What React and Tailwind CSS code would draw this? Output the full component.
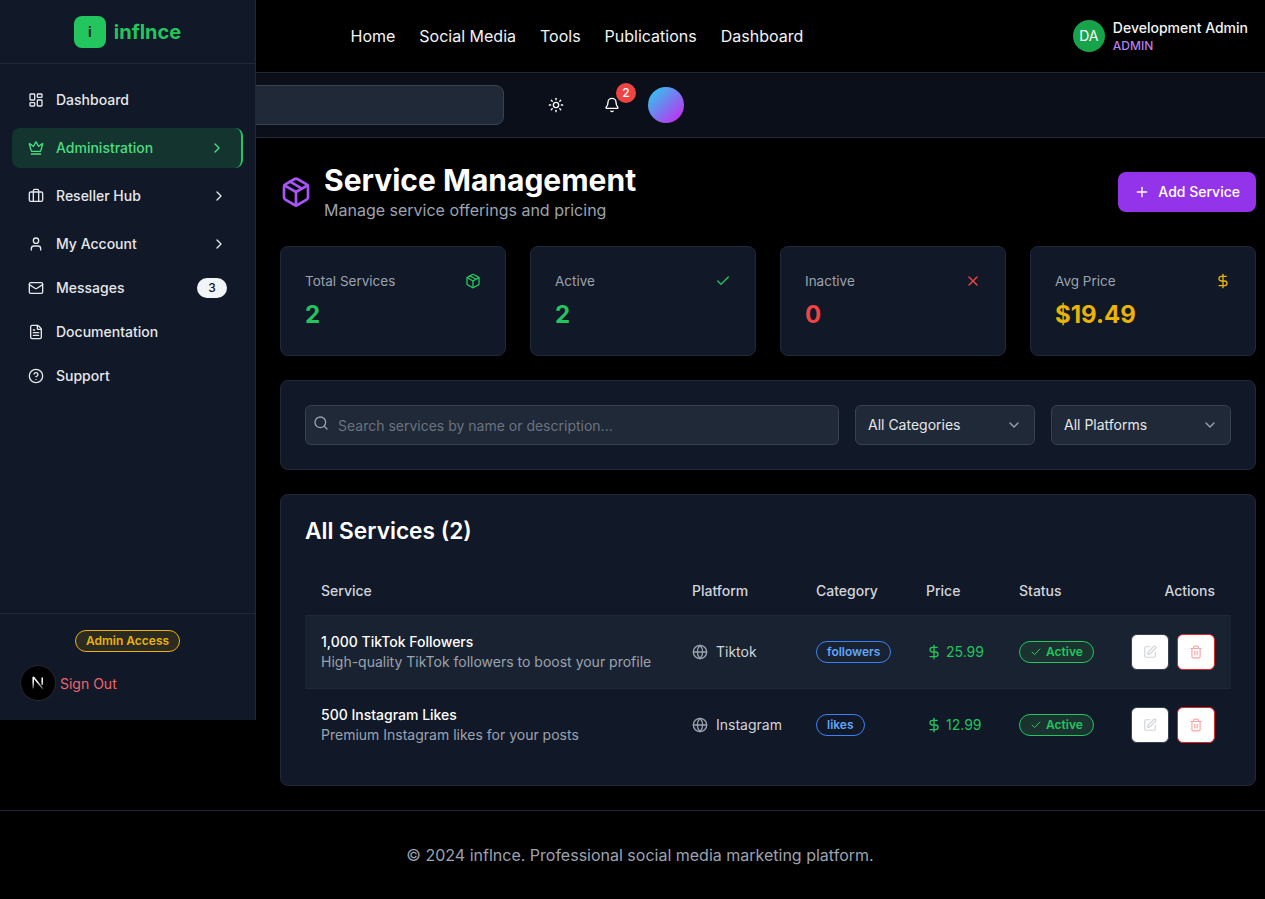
import {
  Bell,
  Briefcase,
  Check,
  ChevronDown,
  ChevronRight,
  CircleHelp,
  Crown,
  DollarSign,
  FileText,
  Globe,
  LayoutDashboard,
  Mail,
  Package,
  Plus,
  Search,
  SquarePen,
  Sun,
  Trash2,
  User,
  X,
} from "lucide-react";

const NAV_ITEMS = [
  { label: "Dashboard", icon: LayoutDashboard, gap: "mb-2" },
  { label: "Administration", icon: Crown, chevron: true, active: true, gap: "mb-2" },
  { label: "Reseller Hub", icon: Briefcase, chevron: true, gap: "mb-2" },
  { label: "My Account", icon: User, chevron: true, gap: "mb-1" },
  { label: "Messages", icon: Mail, badge: "3", gap: "mb-1" },
  { label: "Documentation", icon: FileText, gap: "mb-1" },
  { label: "Support", icon: CircleHelp, gap: "mb-1" },
];

const STATS = [
  { label: "Total Services", value: "2", icon: Package, color: "text-[#22c55e]" },
  { label: "Active", value: "2", icon: Check, color: "text-[#22c55e]" },
  { label: "Inactive", value: "0", icon: X, color: "text-[#ef4444]" },
  { label: "Avg Price", value: "$19.49", icon: DollarSign, color: "text-[#eab308]" },
];

const SERVICES = [
  {
    name: "1,000 TikTok Followers",
    description: "High-quality TikTok followers to boost your profile",
    platform: "Tiktok",
    category: "followers",
    price: "25.99",
    highlight: true,
  },
  {
    name: "500 Instagram Likes",
    description: "Premium Instagram likes for your posts",
    platform: "Instagram",
    category: "likes",
    price: "12.99",
  },
];

const ROW_GRID = "grid grid-cols-[371px_124px_110px_93px_1fr] items-center px-4";

function Sidebar() {
  return (
    <aside className="absolute left-0 top-0 z-10 flex h-[720px] w-[256px] flex-col border-r border-[#1f2937] bg-[#111827]">
      <div className="flex h-[64px] items-center justify-center gap-2 border-b border-[#1f2937]">
        <div className="flex h-8 w-8 items-center justify-center rounded-lg bg-[#22c55e] text-sm font-semibold text-[#0b0f19]">i</div>
        <span className="text-xl font-bold text-[#22c55e]">inflnce</span>
      </div>

      <nav className="flex-1 px-3 pt-4">
        {NAV_ITEMS.map((item) => (
          <div
            key={item.label}
            className={`flex h-10 items-center gap-3 rounded-lg pl-4 text-sm font-medium ${item.gap} ${
              item.active ? "border-r-2 border-[#22c55e] bg-[#14352f] pr-4 text-[#4ade80]" : "pr-4 text-[#e5e7eb]"
            }`}
          >
            <item.icon className="h-4 w-4" />
            <span className="flex-1">{item.label}</span>
            {item.chevron && <ChevronRight className="h-4 w-4" />}
            {item.badge && (
              <span className="flex h-[20px] w-[30px] items-center justify-center rounded-full bg-[#f1f5f9] text-xs font-medium text-[#111827]">
                {item.badge}
              </span>
            )}
          </div>
        ))}
      </nav>

      <div className="h-[107px] border-t border-[#1f2937] pt-4">
        <div className="flex justify-center">
          <span className="flex h-[22px] items-center rounded-full border border-[#eab308] bg-[#2b2b22] px-2.5 text-xs font-semibold text-[#eab308]">
            Admin Access
          </span>
        </div>
        <div className="mt-[13px] flex items-center gap-1 pl-5">
          <div className="flex h-9 w-9 items-center justify-center rounded-full border border-[#2a2a2a] bg-black">
            <svg width="16" height="16" viewBox="0 0 16 16" fill="none">
              <defs>
                <linearGradient id="next-fade" gradientUnits="userSpaceOnUse" x1="8" y1="3" x2="8" y2="14">
                  <stop offset="0.35" stopColor="#fff" />
                  <stop offset="1" stopColor="#fff" stopOpacity="0.2" />
                </linearGradient>
              </defs>
              <path d="M3.2 13.5V2.6h.6L13 14" stroke="url(#next-fade)" strokeWidth="1.5" />
              <path d="M12.2 2.6v7.5" stroke="url(#next-fade)" strokeWidth="1.5" />
            </svg>
          </div>
          <span className="pt-0.5 text-sm text-[#ee6570]">Sign Out</span>
        </div>
      </div>
    </aside>
  );
}

function TopBar() {
  return (
    <header className="flex h-[73px] items-center justify-between border-b border-[#1f2937] pl-[350.5px] pr-8">
      <nav className="flex gap-6 text-base text-[#f3f4f6]">
        <span>Home</span>
        <span>Social Media</span>
        <span>Tools</span>
        <span>Publications</span>
        <span>Dashboard</span>
      </nav>
      <div className="flex items-center gap-2">
        <div className="flex h-8 w-8 items-center justify-center rounded-full bg-[#16a34a] text-sm text-white">DA</div>
        <div>
          <p className="text-sm font-medium leading-5 text-[#f3f4f6]">Development Admin</p>
          <p className="text-xs font-medium leading-4 text-[#b57ee8]">ADMIN</p>
        </div>
      </div>
    </header>
  );
}

function Toolbar() {
  return (
    <div className="flex h-[65px] items-center border-b border-[#1f2937] bg-[#0b0f19] px-6">
      <div className="h-10 w-[480px] rounded-lg border border-[#374151] bg-[#1f2937]" />
      <div className="ml-[34px] flex h-9 w-9 items-center justify-center text-white">
        <Sun className="h-4 w-4" />
      </div>
      <div className="relative ml-5 flex h-9 w-9 items-center justify-center text-white">
        <Bell className="h-4 w-4" />
        <span className="absolute -right-1.5 -top-1 flex h-5 w-5 items-center justify-center rounded-full bg-[#ef4444] text-xs font-medium text-white">
          2
        </span>
      </div>
      <div className="ml-[18px] h-9 w-9 rounded-full bg-linear-to-br/srgb from-[#22d3ee] to-[#d020f0]" />
    </div>
  );
}

function StatCard({ stat }) {
  return (
    <div className="rounded-lg border border-[#1f2937] bg-[#111827] p-6">
      <div className="flex items-center justify-between">
        <span className="text-[13.5px] leading-5 text-[#9ca3af]">{stat.label}</span>
        <stat.icon className={`h-4 w-4 ${stat.color}`} />
      </div>
      <p className={`mt-2 text-2xl font-bold ${stat.color}`}>{stat.value}</p>
    </div>
  );
}

function Select({ label }) {
  return (
    <div className="flex h-10 w-[180px] items-center justify-between rounded-md border border-[#374151] bg-[#1f2937] px-3 text-sm text-[#e5e7eb]">
      <span>{label}</span>
      <ChevronDown className="h-4 w-4 text-[#9ca3af]" />
    </div>
  );
}

function ServiceRow({ service }) {
  return (
    <div className={`${ROW_GRID} ${service.highlight ? "h-[73px] border-b border-[#1f2937] bg-[#182230]" : "h-[72px]"}`}>
      <div>
        <p className="text-sm font-medium leading-5 text-white">{service.name}</p>
        <p className="text-sm leading-5 text-[#9ca3af]">{service.description}</p>
      </div>
      <div className="flex items-center gap-2 text-sm text-[#d1d5db]">
        <Globe className="h-4 w-4 text-[#9ca3af]" />
        {service.platform}
      </div>
      <div className="flex">
        <span className="flex h-[22px] items-center rounded-full border border-[#3b82f6] px-2.5 text-xs font-semibold text-[#60a5fa]">
          {service.category}
        </span>
      </div>
      <div className="flex items-center gap-1 text-sm text-[#22c55e]">
        <DollarSign className="h-4 w-4" />
        {service.price}
      </div>
      <div className="flex items-center justify-between">
        <span className="flex h-[22px] items-center gap-1 rounded-full border border-[#22c55e] bg-[#1a3330] px-2.5 text-xs font-semibold text-[#22c55e]">
          <Check className="h-3 w-3" />
          Active
        </span>
        <div className="flex gap-2">
          <div className="flex h-9 w-[38px] items-center justify-center rounded-md border border-[#374151] bg-white text-[#d1d5db]">
            <SquarePen className="h-3.5 w-3.5" />
          </div>
          <div className="flex h-9 w-[38px] items-center justify-center rounded-md border border-[#dc2626] bg-white text-[#fca5a5]">
            <Trash2 className="h-3.5 w-3.5" />
          </div>
        </div>
      </div>
    </div>
  );
}

export default function App() {
  return (
    <div className="relative h-[899px] w-[1265px] overflow-hidden bg-black font-['Inter',sans-serif]">
      <Sidebar />
      <div className="w-[1280px]">
        <TopBar />
        <Toolbar />

        <main className="pb-6 pl-[280px] pr-6 pt-6">
          <div className="mb-6 flex items-center justify-between">
            <div className="flex items-center gap-3">
              <Package className="h-8 w-8 text-[#a855f7]" />
              <div>
                <h1 className="text-3xl font-bold text-white">Service Management</h1>
                <p className="text-base text-[#9ca3af]">Manage service offerings and pricing</p>
              </div>
            </div>
            <button className="flex h-10 items-center gap-2 rounded-lg bg-[#9333ea] px-4 text-sm font-medium text-white">
              <Plus className="h-4 w-4" />
              Add Service
            </button>
          </div>

          <div className="mb-6 grid grid-cols-4 gap-6">
            {STATS.map((stat) => (
              <StatCard key={stat.label} stat={stat} />
            ))}
          </div>

          <div className="mb-6 flex gap-4 rounded-lg border border-[#1f2937] bg-[#111827] p-6">
            <div className="flex h-10 flex-1 items-center gap-[9px] rounded-md border border-[#374151] bg-[#1f2937] pl-[7px] text-sm text-[#6b7280]">
              <Search className="h-4 w-4 -translate-y-0.5 text-[#9ca3af]" />
              <span className="translate-y-px">Search services by name or description...</span>
            </div>
            <Select label="All Categories" />
            <Select label="All Platforms" />
          </div>

          <div className="rounded-lg border border-[#1f2937] bg-[#111827] px-6 pb-6 pt-5">
            <h2 className="text-[22.7px] font-semibold leading-8 text-white">All Services (2)</h2>
            <div className={`${ROW_GRID} mt-5 h-[49px] border-b border-[#1f2937] text-sm font-medium text-[#d1d5db]`}>
              <span>Service</span>
              <span>Platform</span>
              <span>Category</span>
              <span>Price</span>
              <div className="flex justify-between">
                <span>Status</span>
                <span>Actions</span>
              </div>
            </div>
            {SERVICES.map((service) => (
              <ServiceRow key={service.name} service={service} />
            ))}
          </div>
        </main>

        <footer className="border-t border-[#1f2937] py-8 text-center text-base text-[#9ca3af]">
          © 2024 inflnce. Professional social media marketing platform.
        </footer>
      </div>
    </div>
  );
}
